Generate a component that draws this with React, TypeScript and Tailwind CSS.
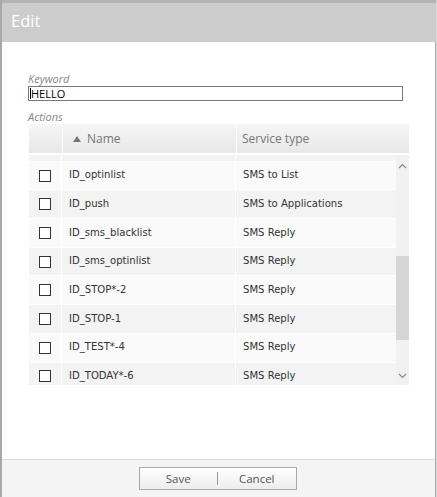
import React from 'react';

type Action = { name: string; service: string };

const actions: Action[] = [
  { name: 'ID_optinlist', service: 'SMS to List' },
  { name: 'ID_push', service: 'SMS to Applications' },
  { name: 'ID_sms_blacklist', service: 'SMS Reply' },
  { name: 'ID_sms_optinlist', service: 'SMS Reply' },
  { name: 'ID_STOP*-2', service: 'SMS Reply' },
  { name: 'ID_STOP-1', service: 'SMS Reply' },
  { name: 'ID_TEST*-4', service: 'SMS Reply' },
  { name: 'ID_TODAY*-6', service: 'SMS Reply' },
];

const Chevron = ({ up }: { up?: boolean }) => (
  <svg width="9" height="6" viewBox="0 0 9 6" className="block">
    <path
      d={up ? 'M1 5 L4.5 1.5 L8 5' : 'M1 1 L4.5 4.5 L8 1'}
      fill="none"
      stroke="#8a8a8a"
      strokeWidth="1.2"
    />
  </svg>
);

const ActionRow = ({ action, odd }: { action: Action; odd: boolean }) => (
  <div className={`flex h-[28.7px] border-b border-white ${odd ? 'bg-[#f3f3f3]' : 'bg-[#fafafa]'}`}>
    <div className="w-[33px] border-r border-white flex items-center justify-center">
      <span className="w-[12px] h-[12px] border border-[#333] bg-white" />
    </div>
    <div className="w-[174px] border-r border-white flex items-center pl-[7px] text-[11.2px] text-[#333]">
      {action.name}
    </div>
    <div className="flex-1 flex items-center pl-[7px] text-[11.2px] text-[#333]">{action.service}</div>
  </div>
);

export default function App() {
  return (
    <div className="w-[437px] h-[497px] bg-[#d8d8d8] overflow-hidden font-['Open_Sans',sans-serif]">
      <div className="w-[436px] h-full flex flex-col bg-white border-l-2 border-r border-[#a8a8a8]">
        <div className="h-[42px] shrink-0 bg-[#cccccc] border-t-[3px] border-[#b4b4b4] flex items-center pl-[9px] -mr-px">
          <span className="text-white text-[16.5px] leading-none pb-[2px]">Edit</span>
        </div>

        <div className="flex-1 pl-[26px] pt-[30px]">
          <div className="text-[11px] italic text-[#888] leading-[14px]">Keyword</div>
          <div className="w-[375px] h-[15px] border border-[#7a7a7a] flex items-center px-[1px] text-[11px] text-black leading-none">
            <span className="w-px h-[11px] bg-black" />
            HELLO
          </div>
          <div className="text-[11px] italic text-[#888] leading-[14px] mt-[9px]">Actions</div>

          <div className="ml-[1px] w-[380px]">
            <div className="flex h-[29px] text-[12px] leading-[16px] text-[#777]">
              <div className="w-[34px] border-r border-white bg-gradient-to-b from-[#f6f6f6] to-[#e7e7e7]" />
              <div className="w-[174px] border-r border-white bg-gradient-to-b from-[#f6f6f6] to-[#e7e7e7] flex items-center pl-[10px] gap-[6px]">
                <svg width="8" height="6" viewBox="0 0 8 6">
                  <path d="M0 6 L4 0 L8 6 Z" fill="#777" />
                </svg>
                <span>Name</span>
              </div>
              <div className="flex-1 bg-gradient-to-b from-[#f6f6f6] to-[#e7e7e7] flex items-center pl-[5px]">
                <span>Service type</span>
              </div>
            </div>

            <div className="flex h-[230px] mt-[2px] font-['DejaVu_Sans_Condensed','DejaVu_Sans',sans-serif]">
              <div className="w-[367px] overflow-hidden">
                {/* bottom of the row scrolled out of view */}
                <div className="flex h-[6.7px] border-b border-white bg-[#f3f3f3]">
                  <div className="w-[33px] border-r border-white" />
                  <div className="w-[174px] border-r border-white" />
                  <div className="flex-1" />
                </div>
                {actions.map((a, i) => (
                  <ActionRow key={a.name} action={a} odd={i % 2 === 1} />
                ))}
              </div>
              <div className="flex-1 bg-[#f1f1f1] flex flex-col items-center">
                <div className="h-[20px] flex items-center pt-[2px]">
                  <Chevron up />
                </div>
                <div className="w-full mt-[81px] h-[84px] bg-[#d5d5d5]" />
                <div className="mt-auto h-[16px] flex items-start pt-[4px]">
                  <Chevron />
                </div>
              </div>
            </div>
          </div>
        </div>

        <div className="h-[38px] shrink-0 bg-[#f4f4f4] border-t border-[#dcdcdc] flex justify-center pt-[7px]">
          <div className="ml-[-2px] w-[158px] h-[23px] border border-[#a9a9a9] bg-gradient-to-b from-white to-[#ececec] flex items-center text-[11.5px] text-[#555]">
            <span className="flex-1 text-center">Save</span>
            <span className="w-px h-[13px] bg-[#999]" />
            <span className="flex-1 text-center">Cancel</span>
          </div>
        </div>
      </div>
    </div>
  );
}
